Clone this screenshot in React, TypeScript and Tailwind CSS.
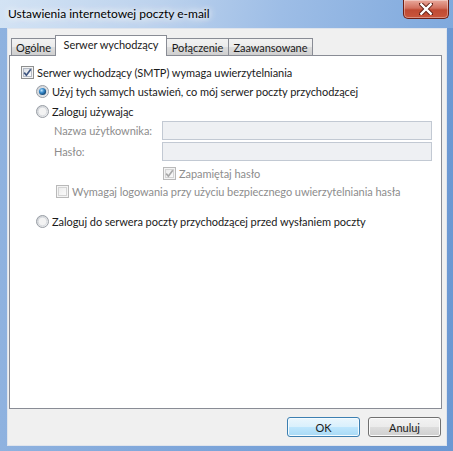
import type { ReactNode } from "react";

const ui = "font-['Lato','Liberation_Sans',Arial,sans-serif] text-[11px] tracking-[-0.05px] leading-none whitespace-nowrap";

function CheckBox({ checked, disabled }: { checked?: boolean; disabled?: boolean }) {
  const border = disabled ? "#b9b9b9" : "#8e8f8f";
  const mark = disabled ? "#a8a8a8" : "#3f5680";
  return (
    <svg width="13" height="13" viewBox="0 0 13 13" className="shrink-0">
      <defs>
        <linearGradient id={disabled ? "cbd" : "cbe"} x1="0" y1="0" x2="1" y2="1">
          <stop offset="0" stopColor={disabled ? "#ececec" : "#d9dde3"} />
          <stop offset="1" stopColor={disabled ? "#fbfbfb" : "#ffffff"} />
        </linearGradient>
      </defs>
      <rect x="0.5" y="0.5" width="12" height="12" fill="#f4f4f4" stroke={border} />
      <rect x="2.5" y="2.5" width="8" height="8" fill={`url(#${disabled ? "cbd" : "cbe"})`} stroke={disabled ? "#d4d4d4" : "#b4bac4"} />
      {checked && (
        <path d="M3.2 6.6 L5.4 9.2 L9.8 3.2" fill="none" stroke={mark} strokeWidth="1.7" />
      )}
    </svg>
  );
}

function Radio({ checked }: { checked?: boolean }) {
  return (
    <svg width="13" height="13" viewBox="0 0 13 13" className="shrink-0">
      <defs>
        <linearGradient id="rbg" x1="0" y1="0" x2="1" y2="1">
          <stop offset="0" stopColor="#c8cbd0" />
          <stop offset="1" stopColor="#f7f7f7" />
        </linearGradient>
        <radialGradient id="rdot" cx="0.38" cy="0.35" r="0.7">
          <stop offset="0" stopColor="#bfe6ff" />
          <stop offset="0.45" stopColor="#3a8ccc" />
          <stop offset="1" stopColor="#0e3d69" />
        </radialGradient>
      </defs>
      <circle cx="6.5" cy="6.5" r="6" fill="url(#rbg)" stroke="#999ea5" />
      <circle cx="6.5" cy="6.5" r="4.3" fill="#f3f3f3" stroke="#d2d5da" strokeWidth="0.8" />
      {checked && <circle cx="6.5" cy="6.5" r="3.6" fill="url(#rdot)" />}
    </svg>
  );
}

function Row({ h, children, className = "" }: { h: string; children: ReactNode; className?: string }) {
  return <div className={`flex items-center ${h} ${className}`}>{children}</div>;
}

const tabs = [
  { label: "Ogólne", w: "w-[45px]" },
  { label: "Serwer wychodzący", w: "w-[112px]", active: true },
  { label: "Połączenie", w: "w-[63px]" },
  { label: "Zaawansowane", w: "w-[85px]" },
];

export default function App() {
  return (
    <div
      className={`${ui} w-[453px] h-[451px] flex flex-col text-[#1a1a1a] bg-[linear-gradient(90deg,#8fb2df_0%,#7ea6da_40%,#6b98d3_100%)]`}
    >
      {/* title bar */}
      <div className="h-[28px] flex bg-[linear-gradient(100deg,#d3e3f4_0%,#bcd2ed_35%,#9dbde6_62%,#7fa9dd_100%)]">
        <span className="pl-[8px] self-center text-[12px] tracking-normal text-black [text-shadow:0_0_6px_#fff,0_0_10px_#fff,0_0_14px_#fff]">
          Ustawienia internetowej poczty e-mail
        </span>
        <button className="ml-auto mr-[4px] w-[46px] h-[19px] rounded-b-[5px] border border-t-0 border-[#6e1e14] bg-[linear-gradient(180deg,#e9a99c_0%,#d2705e_45%,#c04a33_55%,#c9563c_100%)] flex items-center justify-center shadow-[inset_0_0_0_1px_rgba(255,255,255,0.35)]">
          <svg width="14" height="12" viewBox="0 0 14 12">
            <path d="M2 1 L12 11 M12 1 L2 11" stroke="#5a1a10" strokeWidth="4.2" strokeLinecap="round" />
            <path d="M2.3 1.3 L11.7 10.7 M11.7 1.3 L2.3 10.7" stroke="#fff" strokeWidth="2.4" strokeLinecap="square" />
          </svg>
        </button>
      </div>

      {/* client area */}
      <div className="flex-1 pl-[7px] pr-[6px] pb-[5px] flex">
        <div className="flex-1 bg-[#f0f0f0] border border-[#dfe4ec] flex flex-col pt-[6px] pl-[1px] pr-[4px]">
          <div className="flex items-end h-[20px] pl-[2px]">
            {tabs.map((t, i) => (
              <div
                key={t.label}
                className={`${t.w} ${i > 0 ? "-ml-px" : ""} flex items-center justify-center border border-b-0 border-[#898c95] ${
                  t.active
                    ? "h-[21px] -mb-px bg-white relative z-10 pb-[3px]"
                    : "h-[17px] bg-[linear-gradient(180deg,#f2f2f2_0%,#ebebeb_50%,#dddddd_51%,#cfcfcf_100%)]"
                }`}
              >
                {t.label}
              </div>
            ))}
          </div>

          <div className="h-[354px] bg-white border border-[#898c95] pt-[6px] flex flex-col">
            <Row h="h-[20px]" className="pl-[11px] gap-[3px]">
              <CheckBox checked />
              <span>Serwer wychodzący (SMTP) wymaga uwierzytelniania</span>
            </Row>
            <Row h="h-[18px]" className="pl-[26px] gap-[3px]">
              <Radio checked />
              <span>Użyj tych samych ustawień, co mój serwer poczty przychodzącej</span>
            </Row>
            <Row h="h-[20px]" className="pl-[26px] gap-[3px] mt-[1px]">
              <Radio />
              <span>Zaloguj używając</span>
            </Row>
            <div className="flex flex-col gap-[2px] pl-[44px] pr-[9px]">
              <Row h="h-[19px]">
                <span className="w-[108px] text-[#8d8d8d]">Nazwa użytkownika:</span>
                <div className="flex-1 h-full border border-[#c2c9d3] bg-[#eef0f3]" />
              </Row>
              <Row h="h-[19px]">
                <span className="w-[108px] text-[#8d8d8d]">Hasło:</span>
                <div className="flex-1 h-full border border-[#c2c9d3] bg-[#eef0f3]" />
              </Row>
            </div>
            <Row h="h-[18px]" className="pl-[153px] gap-[3px] mt-[3px] text-[#8d8d8d]">
              <CheckBox checked disabled />
              <span>Zapamiętaj hasło</span>
            </Row>
            <Row h="h-[18px]" className="pl-[46px] gap-[3px] text-[#8d8d8d]">
              <CheckBox disabled />
              <span>Wymagaj logowania przy użyciu bezpiecznego uwierzytelniania hasła</span>
            </Row>
            <Row h="h-[18px]" className="pl-[26px] gap-[3px] mt-[12px]">
              <Radio />
              <span>Zaloguj do serwera poczty przychodzącej przed wysłaniem poczty</span>
            </Row>
          </div>

          <div className="flex justify-end gap-[8px] mt-[8px] pr-[1px]">
            <button className="w-[73px] h-[20px] rounded-[3px] border border-[#3c7fb1] bg-[linear-gradient(180deg,#eaf6fd_0%,#d9f0fc_50%,#bee6fd_51%,#a7d9f5_100%)] shadow-[inset_0_0_0_1px_#f4fbff]">
              OK
            </button>
            <button className="w-[73px] h-[20px] rounded-[3px] border border-[#707070] bg-[linear-gradient(180deg,#f2f2f2_0%,#ebebeb_50%,#dddddd_51%,#cfcfcf_100%)] shadow-[inset_0_0_0_1px_#fbfbfb]">
              Anuluj
            </button>
          </div>
        </div>
      </div>
    </div>
  );
}
